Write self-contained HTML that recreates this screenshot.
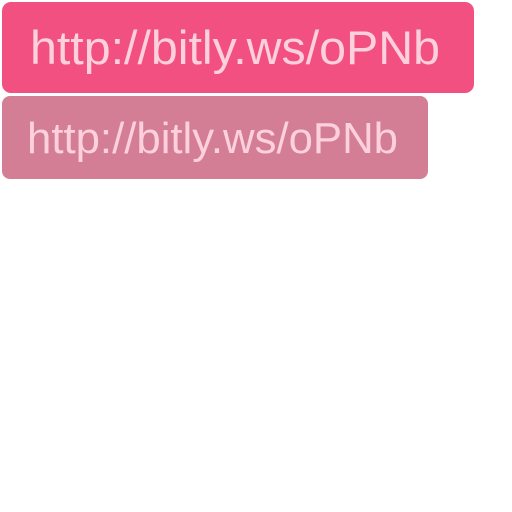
<!DOCTYPE html>
<html><head><style>
html,body{margin:0;padding:0;background:#fff;width:512px;height:512px;overflow:hidden}
</style></head><body>
<svg width="512" height="512" xmlns="http://www.w3.org/2000/svg">
<rect x="2" y="2" width="472" height="91" rx="9" fill="#f35082"/>
<rect x="2" y="96" width="426" height="83" rx="8" fill="#d47e96"/>
<text x="30" y="64" font-family="Liberation Sans, sans-serif" font-size="47" fill="#fcd0dc" textLength="410" lengthAdjust="spacingAndGlyphs">http://bitly.ws/oPNb</text>
<text x="27" y="153" font-family="Liberation Sans, sans-serif" font-size="44" fill="#fcd0dc" textLength="371" lengthAdjust="spacingAndGlyphs">http://bitly.ws/oPNb</text>
</svg>
</body></html>
